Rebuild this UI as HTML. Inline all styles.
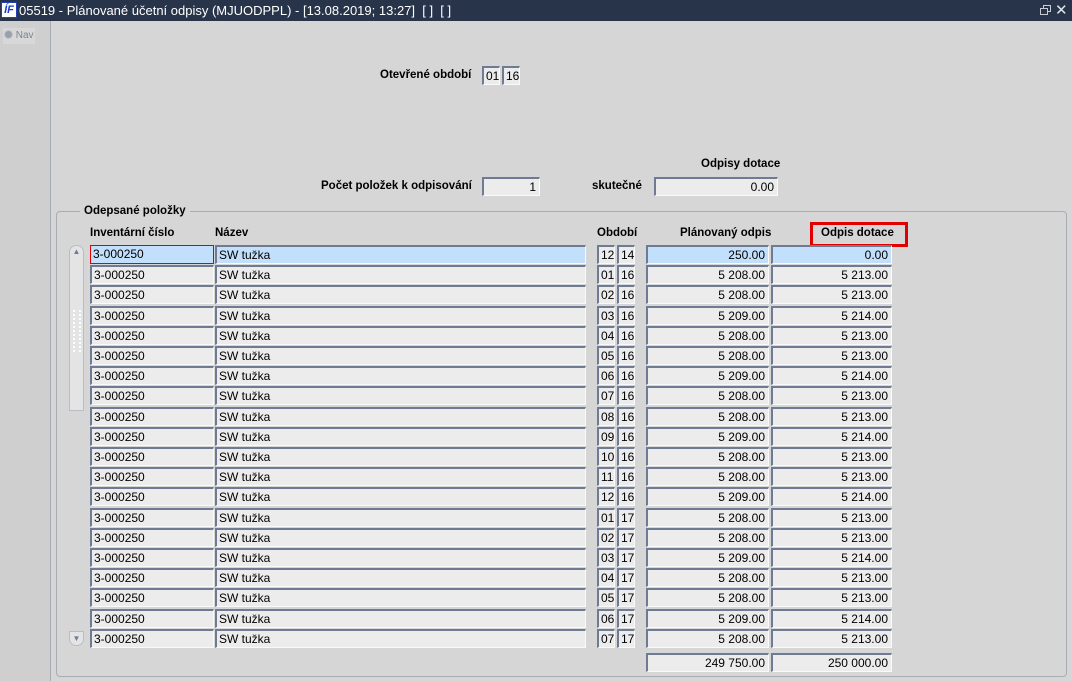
<!DOCTYPE html><html><head><meta charset="utf-8"><style>
*{box-sizing:border-box;margin:0;padding:0}
body{width:1072px;height:681px;background:#d6d6d6;font-family:"Liberation Sans",Arial,sans-serif;font-size:12px;color:#000;position:relative;overflow:hidden}
.a{position:absolute}
.tb{left:0;top:0;width:1072px;height:21px;background:#27344a;color:#fff;font-size:13px;line-height:21px;padding-left:19px;white-space:nowrap}
.f{position:absolute;height:19px;background:#ececec;border-top:2px solid #6f7b92;border-left:2px solid #6f7b92;border-bottom:1px solid #fafafa;border-right:1px solid #fafafa;line-height:16px;padding:0 2px;white-space:nowrap;overflow:hidden}
.r{text-align:right;padding-right:3px}
.s{background:#c2e0fb}
.l{position:absolute;font-weight:bold;white-space:nowrap;font-size:11.5px}
</style></head><body>
<div class="a tb">05519 - Plánované účetní odpisy (MJUODPPL) - [13.08.2019; 13:27]&nbsp; [ ]&nbsp; [ ]</div>
<div class="a" style="left:1px;top:2px;width:16px;height:16px;background:#fff;border:1px solid #2040c0;color:#1a3cc8;font-weight:bold;font-style:italic;font-size:11px;line-height:14px;text-align:center">ÍF</div>
<div class="a" style="left:1043px;top:5px;width:8px;height:7px;border:1px solid #c8ccd4"></div>
<div class="a" style="left:1040px;top:8px;width:8px;height:7px;border:1px solid #c8ccd4;background:#27344a"></div>
<div class="a" style="left:1055px;top:0;color:#e0e4ea;font-size:15px;line-height:21px">✕</div>
<div class="a" style="left:0;top:21px;width:51px;height:660px;background:#cfcfcf;border-right:1px solid #a8acb4"></div>
<div class="a" style="left:3px;top:28px;width:32px;height:16px;background:#d8d8d8;color:#7a8595;font-size:10px;line-height:16px;padding-left:1px;white-space:nowrap"><span style="display:inline-block;width:9px;height:9px;border-radius:50%;background:#9aa0aa;border:1px solid #c0c4cc;vertical-align:-1px"></span> Nav</div>

<div class="l" style="left:380px;top:69px">Otevřené období</div>
<div class="f" style="left:482px;top:66px;width:18px;height:19px">01</div>
<div class="f" style="left:502px;top:66px;width:18px;height:19px">16</div>
<div class="l" style="left:701px;top:158px">Odpisy dotace</div>
<div class="l" style="left:321px;top:180px">Počet položek k odpisování</div>
<div class="f r" style="left:482px;top:177px;width:58px">1</div>
<div class="l" style="left:592px;top:180px">skutečné</div>
<div class="f r" style="left:654px;top:177px;width:124px">0.00</div>

<div class="a" style="left:56px;top:211px;width:1011px;height:466px;border:1px solid #a8acb4;border-radius:4px"></div>
<div class="l" style="left:80px;top:205px;background:#d6d6d6;padding:0 4px">Odepsané položky</div>
<div class="l" style="left:90px;top:227px">Inventární číslo</div>
<div class="l" style="left:215px;top:227px">Název</div>
<div class="l" style="left:597px;top:227px">Období</div>
<div class="l" style="left:680px;top:227px">Plánovaný odpis</div>
<div class="a" style="left:810px;top:222px;width:98px;height:25px;border:3px solid #e00000"></div>
<div class="l" style="left:821px;top:227px">Odpis dotace</div>

<div class="a" style="left:69px;top:245px;width:15px;height:166px;background:#e4e4e4;border:1px solid #b8bcc4;border-radius:7px 7px 0 0"></div>
<div class="a" style="left:69px;top:245px;width:15px;height:15px;color:#6f7b92;font-size:8px;text-align:center;line-height:14px">▲</div>
<div class="a" style="left:69px;top:631px;width:15px;height:15px;background:#e4e4e4;border:1px solid #b8bcc4;border-radius:0 0 7px 7px;color:#6f7b92;font-size:8px;text-align:center;line-height:13px">▼</div>
<div class="a" style="left:73px;top:310px;width:8px;height:42px;border-left:2px dotted #fff;border-right:2px dotted #fff"></div>

<div class="f s" style="left:90px;top:245px;width:124px;border:1px solid #e00000">3-000250</div><div class="f s" style="left:215px;top:245px;width:371px">SW tužka</div><div class="f" style="left:597px;top:245px;width:18px">12</div><div class="f" style="left:617px;top:245px;width:18px">14</div><div class="f r s" style="left:646px;top:245px;width:123px">250.00</div><div class="f r s" style="left:771px;top:245px;width:121px">0.00</div>
<div class="f" style="left:90px;top:265px;width:124px">3-000250</div><div class="f" style="left:215px;top:265px;width:371px">SW tužka</div><div class="f" style="left:597px;top:265px;width:18px">01</div><div class="f" style="left:617px;top:265px;width:18px">16</div><div class="f r" style="left:646px;top:265px;width:123px">5 208.00</div><div class="f r" style="left:771px;top:265px;width:121px">5 213.00</div>
<div class="f" style="left:90px;top:285px;width:124px">3-000250</div><div class="f" style="left:215px;top:285px;width:371px">SW tužka</div><div class="f" style="left:597px;top:285px;width:18px">02</div><div class="f" style="left:617px;top:285px;width:18px">16</div><div class="f r" style="left:646px;top:285px;width:123px">5 208.00</div><div class="f r" style="left:771px;top:285px;width:121px">5 213.00</div>
<div class="f" style="left:90px;top:306px;width:124px">3-000250</div><div class="f" style="left:215px;top:306px;width:371px">SW tužka</div><div class="f" style="left:597px;top:306px;width:18px">03</div><div class="f" style="left:617px;top:306px;width:18px">16</div><div class="f r" style="left:646px;top:306px;width:123px">5 209.00</div><div class="f r" style="left:771px;top:306px;width:121px">5 214.00</div>
<div class="f" style="left:90px;top:326px;width:124px">3-000250</div><div class="f" style="left:215px;top:326px;width:371px">SW tužka</div><div class="f" style="left:597px;top:326px;width:18px">04</div><div class="f" style="left:617px;top:326px;width:18px">16</div><div class="f r" style="left:646px;top:326px;width:123px">5 208.00</div><div class="f r" style="left:771px;top:326px;width:121px">5 213.00</div>
<div class="f" style="left:90px;top:346px;width:124px">3-000250</div><div class="f" style="left:215px;top:346px;width:371px">SW tužka</div><div class="f" style="left:597px;top:346px;width:18px">05</div><div class="f" style="left:617px;top:346px;width:18px">16</div><div class="f r" style="left:646px;top:346px;width:123px">5 208.00</div><div class="f r" style="left:771px;top:346px;width:121px">5 213.00</div>
<div class="f" style="left:90px;top:366px;width:124px">3-000250</div><div class="f" style="left:215px;top:366px;width:371px">SW tužka</div><div class="f" style="left:597px;top:366px;width:18px">06</div><div class="f" style="left:617px;top:366px;width:18px">16</div><div class="f r" style="left:646px;top:366px;width:123px">5 209.00</div><div class="f r" style="left:771px;top:366px;width:121px">5 214.00</div>
<div class="f" style="left:90px;top:386px;width:124px">3-000250</div><div class="f" style="left:215px;top:386px;width:371px">SW tužka</div><div class="f" style="left:597px;top:386px;width:18px">07</div><div class="f" style="left:617px;top:386px;width:18px">16</div><div class="f r" style="left:646px;top:386px;width:123px">5 208.00</div><div class="f r" style="left:771px;top:386px;width:121px">5 213.00</div>
<div class="f" style="left:90px;top:407px;width:124px">3-000250</div><div class="f" style="left:215px;top:407px;width:371px">SW tužka</div><div class="f" style="left:597px;top:407px;width:18px">08</div><div class="f" style="left:617px;top:407px;width:18px">16</div><div class="f r" style="left:646px;top:407px;width:123px">5 208.00</div><div class="f r" style="left:771px;top:407px;width:121px">5 213.00</div>
<div class="f" style="left:90px;top:427px;width:124px">3-000250</div><div class="f" style="left:215px;top:427px;width:371px">SW tužka</div><div class="f" style="left:597px;top:427px;width:18px">09</div><div class="f" style="left:617px;top:427px;width:18px">16</div><div class="f r" style="left:646px;top:427px;width:123px">5 209.00</div><div class="f r" style="left:771px;top:427px;width:121px">5 214.00</div>
<div class="f" style="left:90px;top:447px;width:124px">3-000250</div><div class="f" style="left:215px;top:447px;width:371px">SW tužka</div><div class="f" style="left:597px;top:447px;width:18px">10</div><div class="f" style="left:617px;top:447px;width:18px">16</div><div class="f r" style="left:646px;top:447px;width:123px">5 208.00</div><div class="f r" style="left:771px;top:447px;width:121px">5 213.00</div>
<div class="f" style="left:90px;top:467px;width:124px">3-000250</div><div class="f" style="left:215px;top:467px;width:371px">SW tužka</div><div class="f" style="left:597px;top:467px;width:18px">11</div><div class="f" style="left:617px;top:467px;width:18px">16</div><div class="f r" style="left:646px;top:467px;width:123px">5 208.00</div><div class="f r" style="left:771px;top:467px;width:121px">5 213.00</div>
<div class="f" style="left:90px;top:487px;width:124px">3-000250</div><div class="f" style="left:215px;top:487px;width:371px">SW tužka</div><div class="f" style="left:597px;top:487px;width:18px">12</div><div class="f" style="left:617px;top:487px;width:18px">16</div><div class="f r" style="left:646px;top:487px;width:123px">5 209.00</div><div class="f r" style="left:771px;top:487px;width:121px">5 214.00</div>
<div class="f" style="left:90px;top:508px;width:124px">3-000250</div><div class="f" style="left:215px;top:508px;width:371px">SW tužka</div><div class="f" style="left:597px;top:508px;width:18px">01</div><div class="f" style="left:617px;top:508px;width:18px">17</div><div class="f r" style="left:646px;top:508px;width:123px">5 208.00</div><div class="f r" style="left:771px;top:508px;width:121px">5 213.00</div>
<div class="f" style="left:90px;top:528px;width:124px">3-000250</div><div class="f" style="left:215px;top:528px;width:371px">SW tužka</div><div class="f" style="left:597px;top:528px;width:18px">02</div><div class="f" style="left:617px;top:528px;width:18px">17</div><div class="f r" style="left:646px;top:528px;width:123px">5 208.00</div><div class="f r" style="left:771px;top:528px;width:121px">5 213.00</div>
<div class="f" style="left:90px;top:548px;width:124px">3-000250</div><div class="f" style="left:215px;top:548px;width:371px">SW tužka</div><div class="f" style="left:597px;top:548px;width:18px">03</div><div class="f" style="left:617px;top:548px;width:18px">17</div><div class="f r" style="left:646px;top:548px;width:123px">5 209.00</div><div class="f r" style="left:771px;top:548px;width:121px">5 214.00</div>
<div class="f" style="left:90px;top:568px;width:124px">3-000250</div><div class="f" style="left:215px;top:568px;width:371px">SW tužka</div><div class="f" style="left:597px;top:568px;width:18px">04</div><div class="f" style="left:617px;top:568px;width:18px">17</div><div class="f r" style="left:646px;top:568px;width:123px">5 208.00</div><div class="f r" style="left:771px;top:568px;width:121px">5 213.00</div>
<div class="f" style="left:90px;top:588px;width:124px">3-000250</div><div class="f" style="left:215px;top:588px;width:371px">SW tužka</div><div class="f" style="left:597px;top:588px;width:18px">05</div><div class="f" style="left:617px;top:588px;width:18px">17</div><div class="f r" style="left:646px;top:588px;width:123px">5 208.00</div><div class="f r" style="left:771px;top:588px;width:121px">5 213.00</div>
<div class="f" style="left:90px;top:609px;width:124px">3-000250</div><div class="f" style="left:215px;top:609px;width:371px">SW tužka</div><div class="f" style="left:597px;top:609px;width:18px">06</div><div class="f" style="left:617px;top:609px;width:18px">17</div><div class="f r" style="left:646px;top:609px;width:123px">5 209.00</div><div class="f r" style="left:771px;top:609px;width:121px">5 214.00</div>
<div class="f" style="left:90px;top:629px;width:124px">3-000250</div><div class="f" style="left:215px;top:629px;width:371px">SW tužka</div><div class="f" style="left:597px;top:629px;width:18px">07</div><div class="f" style="left:617px;top:629px;width:18px">17</div><div class="f r" style="left:646px;top:629px;width:123px">5 208.00</div><div class="f r" style="left:771px;top:629px;width:121px">5 213.00</div>

<div class="f r" style="left:646px;top:653px;width:123px">249 750.00</div>
<div class="f r" style="left:771px;top:653px;width:121px">250 000.00</div>
</body></html>
